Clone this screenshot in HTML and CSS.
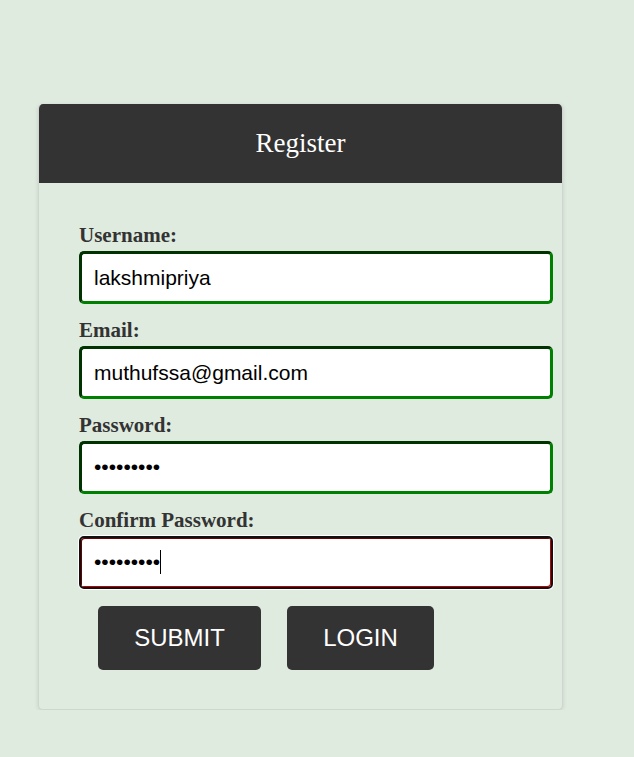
FILE: index.html
```html
<!DOCTYPE html>
<html>
<head>
<meta charset="utf-8">
<link rel="stylesheet" href="styles.css">
</head>
<body>
<div class="card">
  <div class="card-header">Register</div>
  <form class="form">
    <label class="label">Username:</label>
    <div class="input">lakshmipriya</div>
    <label class="label">Email:</label>
    <div class="input">muthufssa@gmail.com</div>
    <label class="label">Password:</label>
    <div class="input dots">•••••••••</div>
    <label class="label">Confirm Password:</label>
    <div class="input dots focused">•••••••••<span class="caret"></span></div>
    <div class="actions">
      <button type="button" class="btn btn-submit">SUBMIT</button>
      <button type="button" class="btn btn-login">LOGIN</button>
    </div>
  </form>
</div>
</body>
</html>
```
FILE: styles.css
```css
html, body {
  margin: 0;
  padding: 0;
  background: #e0ebe0;
}
body {
  padding: 104px 0 0 38px;
  font-family: "Liberation Serif", "Times New Roman", serif;
}
.card {
  width: 525px;
  height: 606px;
  box-sizing: border-box;
  background: #e0ebe0;
  border: 1px solid #cfd6cf;
  border-top: none;
  border-radius: 5px;
  box-shadow: 0 1px 4px rgba(0,0,0,0.12);
  overflow: hidden;
}
.card-header {
  background: #333333;
  color: #ffffff;
  height: 79px;
  display: flex;
  align-items: center;
  justify-content: center;
  font-size: 27px;
}
.form {
  display: flex;
  flex-direction: column;
  padding: 40px 10px 0 40px;
}
.label {
  font-weight: bold;
  font-size: 21px;
  color: #333333;
  line-height: 24px;
  margin-bottom: 4px;
}
.input {
  box-sizing: border-box;
  width: 474px;
  height: 53px;
  margin-bottom: 14px;
  border: 3px solid;
  border-color: #003300 #008000 #008000 #003300;
  border-radius: 5px;
  background: #ffffff;
  font-family: "Liberation Sans", Arial, sans-serif;
  font-size: 21px;
  color: #000;
  padding: 0 12px;
  display: flex;
  align-items: center;
}
.dots {
  font-size: 21px;
  padding-bottom: 2px;
}
.focused {
  border-width: 2px;
  border-color: #101010;
  padding: 0 13px 2px;
  box-shadow: 0 0 0 1px #ffffff, inset 1px 1px 0 #6a0000, inset -1px -1px 0 #c00000;
}
.caret {
  display: inline-block;
  width: 1px;
  height: 24px;
  background: #000;
}
.actions {
  display: flex;
  gap: 26px;
  padding-left: 19px;
  margin-top: 3px;
}
.btn {
  border: none;
  border-radius: 5px;
  background: #333333;
  color: #ffffff;
  font-family: "Liberation Sans", Arial, sans-serif;
  font-size: 24px;
  height: 64px;
  padding: 0;
  cursor: pointer;
}
.btn-submit { width: 163px; }
.btn-login { width: 147px; }
```
